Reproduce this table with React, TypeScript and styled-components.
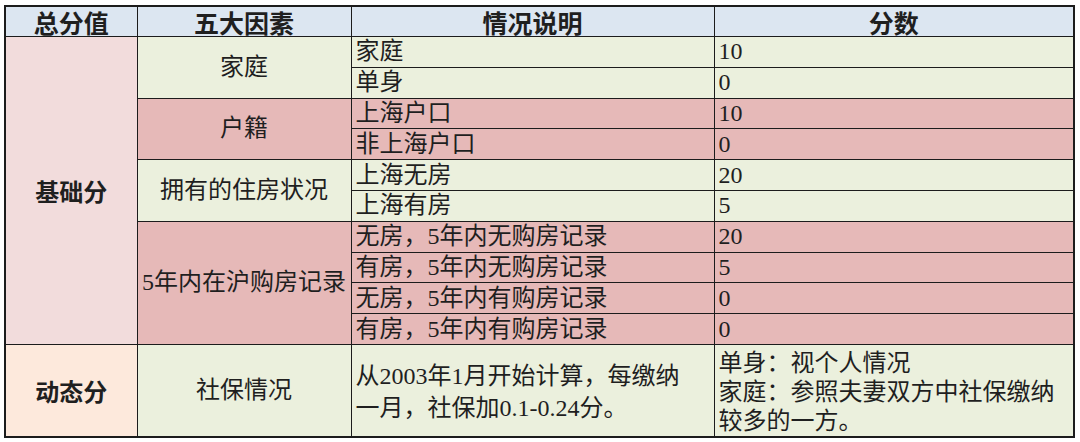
import * as React from 'react'
import styled, { createGlobalStyle } from 'styled-components'

const GlobalStyle = createGlobalStyle`
  html, body {
    margin: 0;
    padding: 0;
    background: #ffffff;
  }
`

const colours = {
  header: '#dce6f1',
  base: '#f2dcdc',
  green: '#ebf0dd',
  pink: '#e6b9b8',
  peach: '#fde9dc',
  line: '#1c1c1c',
  copy: '#1f1f1f'
}

type Tone = 'header' | 'base' | 'green' | 'pink' | 'peach'

const Page = styled.div`
  padding: 5px 7px 0 4px;
`

const Sheet = styled.table`
  width: 1069px;
  border-collapse: collapse;
  table-layout: fixed;
  border: 2px solid ${colours.line};
  font-family: 'Liberation Serif', 'Noto Sans CJK SC', serif;
  font-size: 24px;
  color: ${colours.copy};
`

const HeadCell = styled.th`
  height: 29px;
  padding: 0;
  background: ${colours.header};
  border: 1px solid ${colours.line};
  font-family: 'Noto Sans CJK SC', sans-serif;
  font-weight: 700;
  font-size: 25px;
  line-height: 28px;
  text-align: center;
`

const Cell = styled.td<{ $tone: Tone; $center?: boolean; $strong?: boolean }>`
  height: 29.8px;
  padding: 0 0 0 ${({ $center }) => ($center ? '0' : '4px')};
  background: ${({ $tone }) => colours[$tone]};
  border: 1px solid ${colours.line};
  text-align: ${({ $center }) => ($center ? 'center' : 'left')};
  vertical-align: middle;
  line-height: 29px;
  white-space: nowrap;
  overflow: hidden;
  font-weight: ${({ $strong }) => ($strong ? 700 : 400)};
  font-family: ${({ $strong }) =>
    $strong
      ? `'Noto Sans CJK SC', sans-serif`
      : `'Liberation Serif', 'Noto Sans CJK SC', serif`};
`

const Note = styled.td<{ $tone: Tone; $leading: number }>`
  height: 87px;
  padding: 4px 4px 0;
  background: ${({ $tone }) => colours[$tone]};
  border: 1px solid ${colours.line};
  vertical-align: middle;
  line-height: ${({ $leading }) => $leading}px;
  white-space: nowrap;
`

const Line = styled.div``

interface IOption {
  label: string
  score: string
}

interface IFactor {
  name: string
  tone: Tone
  options: IOption[]
}

const factors: IFactor[] = [
  {
    name: '家庭',
    tone: 'green',
    options: [
      { label: '家庭', score: '10' },
      { label: '单身', score: '0' }
    ]
  },
  {
    name: '户籍',
    tone: 'pink',
    options: [
      { label: '上海户口', score: '10' },
      { label: '非上海户口', score: '0' }
    ]
  },
  {
    name: '拥有的住房状况',
    tone: 'green',
    options: [
      { label: '上海无房', score: '20' },
      { label: '上海有房', score: '5' }
    ]
  },
  {
    name: '5年内在沪购房记录',
    tone: 'pink',
    options: [
      { label: '无房，5年内无购房记录', score: '20' },
      { label: '有房，5年内无购房记录', score: '5' },
      { label: '无房，5年内有购房记录', score: '0' },
      { label: '有房，5年内有购房记录', score: '0' }
    ]
  }
]

const baseRows = factors.reduce((sum, f) => sum + f.options.length, 0)

export default function App() {
  return (
    <Page>
      <GlobalStyle />
      <Sheet>
        <colgroup>
          <col style={{ width: 132 }} />
          <col style={{ width: 214 }} />
          <col style={{ width: 363 }} />
          <col style={{ width: 360 }} />
        </colgroup>
        <thead>
          <tr>
            <HeadCell>总分值</HeadCell>
            <HeadCell>五大因素</HeadCell>
            <HeadCell>情况说明</HeadCell>
            <HeadCell>分数</HeadCell>
          </tr>
        </thead>
        <tbody>
          {factors.map((factor, fi) =>
            factor.options.map((option, oi) => (
              <tr key={`${fi}-${oi}`}>
                {fi === 0 && oi === 0 && (
                  <Cell $tone="base" $center $strong rowSpan={baseRows}>
                    基础分
                  </Cell>
                )}
                {oi === 0 && (
                  <Cell
                    $tone={factor.tone}
                    $center
                    rowSpan={factor.options.length}
                  >
                    {factor.name}
                  </Cell>
                )}
                <Cell $tone={factor.tone}>{option.label}</Cell>
                <Cell $tone={factor.tone}>{option.score}</Cell>
              </tr>
            ))
          )}
          <tr>
            <Cell $tone="peach" $center $strong>
              动态分
            </Cell>
            <Cell $tone="green" $center>
              社保情况
            </Cell>
            <Note $tone="green" $leading={32}>
              <Line>从2003年1月开始计算，每缴纳</Line>
              <Line>一月，社保加0.1-0.24分。</Line>
            </Note>
            <Note $tone="green" $leading={29}>
              <Line>单身：视个人情况</Line>
              <Line>家庭：参照夫妻双方中社保缴纳</Line>
              <Line>较多的一方。</Line>
            </Note>
          </tr>
        </tbody>
      </Sheet>
    </Page>
  )
}
